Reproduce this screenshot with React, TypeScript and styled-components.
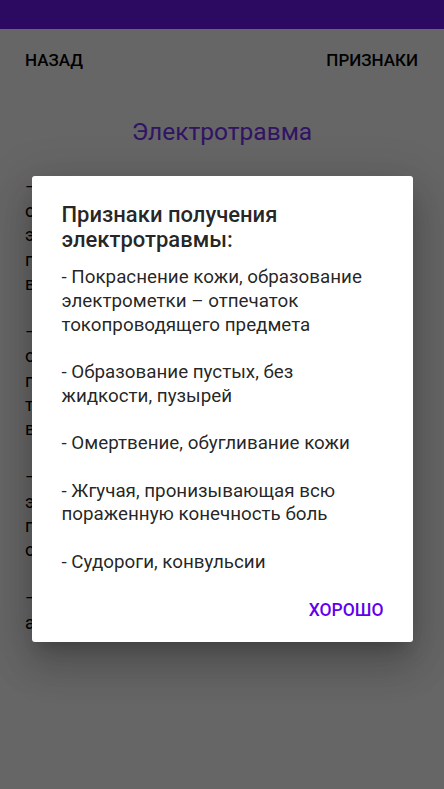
import React from "react";
import styled, { createGlobalStyle } from "styled-components";

const GlobalStyle = createGlobalStyle`
  html, body { margin: 0; padding: 0; background: #ffffff; }
  body { font-family: Roboto, "Noto Sans", "Liberation Sans", sans-serif; }
  * { box-sizing: border-box; }
`;

const Screen = styled.div`
  position: relative;
  width: 444px;
  height: 789px;
  overflow: hidden;
  background: #ffffff;
  display: flex;
  flex-direction: column;
`;

const StatusBar = styled.div`
  height: 29px;
  flex: none;
  background: #7019f5;
`;

const Toolbar = styled.div`
  display: flex;
  justify-content: space-between;
  align-items: center;
  padding: 21px 26px 0 25px;
`;

const ToolButton = styled.span`
  font-size: 17px;
  line-height: 20px;
  font-weight: 500;
  color: #000000;
  text-transform: uppercase;
`;

const Title = styled.h1`
  margin: 47px 0 0;
  text-align: center;
  font-size: 24.5px;
  line-height: 29px;
  font-weight: 400;
  color: #7d32fa;
`;

const Content = styled.div`
  margin-top: 29px;
  padding: 0 25px;
  display: flex;
  flex-direction: column;
  gap: 24.2px;
`;

const Paragraph = styled.div`
  display: flex;
  flex-direction: column;
`;

const Line = styled.div`
  font-size: 18px;
  line-height: 24.2px;
  color: #000000;
  white-space: nowrap;
`;

const Scrim = styled.div`
  position: absolute;
  inset: 0;
  padding-top: 29px;
  background: rgba(0, 0, 0, 0.6);
  display: flex;
  align-items: center;
  justify-content: center;
`;

const Dialog = styled.div`
  width: 381px;
  background: #ffffff;
  border-radius: 3px;
  padding: 26px 29px 21px 30px;
  box-shadow: 0 11px 15px -7px rgba(0, 0, 0, 0.2),
    0 24px 38px 3px rgba(0, 0, 0, 0.14), 0 9px 46px 8px rgba(0, 0, 0, 0.12);
  display: flex;
  flex-direction: column;
`;

const DialogTitle = styled.h2`
  margin: 0;
  font-size: 22px;
  line-height: 25px;
  font-weight: 500;
  color: rgba(0, 0, 0, 0.87);
`;

const DialogBody = styled.div`
  margin-top: 14px;
  display: flex;
  flex-direction: column;
  gap: 23.7px;
`;

const Item = styled.p`
  margin: 0;
  font-size: 18.8px;
  line-height: 23.7px;
  color: rgba(0, 0, 0, 0.87);
`;

const Actions = styled.div`
  margin-top: 25px;
  display: flex;
  justify-content: flex-end;
`;

const ActionButton = styled.button`
  border: none;
  background: transparent;
  padding: 0;
  font-family: inherit;
  font-size: 17.5px;
  line-height: 21px;
  font-weight: 500;
  color: #6200ee;
  text-transform: uppercase;
  cursor: pointer;
`;

const background: string[][] = [
  [
    "– Немедленно прекратить действие тока,",
    "отключив рубильник или",
    "электрический провод",
    "при помощи сухой палки,",
    "веревки или доски.",
  ],
  [
    "– Уложить пострадавшего на спину,",
    "освободить от стесняющей одежды,",
    "принять меры к согреванию",
    "тела и вызвать скорую",
    "врачебную помощь.",
  ],
  [
    "– Наложить на место ожога",
    "электрометки сухую",
    "повязку и дать",
    "обильное питьё.",
  ],
  ["– Не давать пострадавшему", "алкоголь и пищу."],
];

const signs = [
  "- Покраснение кожи, образование электрометки – отпечаток токопроводящего предмета",
  "- Образование пустых, без жидкости, пузырей",
  "- Омертвение, обугливание кожи",
  "- Жгучая, пронизывающая всю пораженную конечность боль",
  "- Судороги, конвульсии",
];

export default function App() {
  return (
    <>
      <GlobalStyle />
      <Screen>
        <StatusBar />
        <Toolbar>
          <ToolButton>Назад</ToolButton>
          <ToolButton>Признаки</ToolButton>
        </Toolbar>
        <Title>Электротравма</Title>
        <Content>
          {background.map((p, i) => (
            <Paragraph key={i}>
              {p.map((l, j) => (
                <Line key={j}>{l}</Line>
              ))}
            </Paragraph>
          ))}
        </Content>
        <Scrim>
          <Dialog>
            <DialogTitle>Признаки получения электротравмы:</DialogTitle>
            <DialogBody>
              {signs.map((s, i) => (
                <Item key={i}>{s}</Item>
              ))}
            </DialogBody>
            <Actions>
              <ActionButton>Хорошо</ActionButton>
            </Actions>
          </Dialog>
        </Scrim>
      </Screen>
    </>
  );
}
